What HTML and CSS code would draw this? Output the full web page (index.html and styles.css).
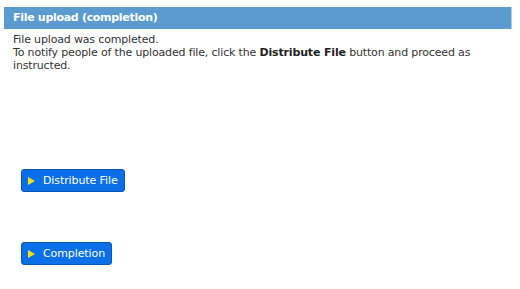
FILE: index.html
```html
<!DOCTYPE html>
<html lang="en">

<head>
    <meta charset="UTF-8">
    <meta name="viewport" content="width=device-width, initial-scale=1.0">
    <title>File upload (completion)</title>
    <link rel="stylesheet" href="styles.css">
</head>

<body>
    <div class="page">
        <h1 class="title-bar">File upload (completion)</h1>
        <div class="message">
            <p>File upload was completed.</p>
            <p>To notify people of the uploaded file, click the <b>Distribute File</b> button and proceed as instructed.</p>
        </div>

        <div class="actions">
            <a href="#" class="button">Distribute File</a>
            <a href="#" class="button">Completion</a>
        </div>
    </div>
</body>

</html>
```

FILE: styles.css
```css
body {
    font-family: "DejaVu Sans", Verdana, sans-serif;
    margin: 0;
    padding: 0;
    background-color: #fff;
    color: #333;
}

.page {
    padding: 7px 8px 0 4px;
}

.title-bar {
    margin: 0;
    height: 22px;
    line-height: 22px;
    padding-left: 9px;
    background-color: #5b9bd0;
    border-right: 1px solid #a9cdea;
    color: #fff;
    font-size: 11px;
    font-weight: bold;
    letter-spacing: -0.3px;
}

.message {
    padding: 4px 0 0 9px;
    font-size: 11px;
    line-height: 13px;
    letter-spacing: -0.16px;
}

.message p {
    margin: 0;
}

.message b {
    color: #222;
}

.actions {
    display: flex;
    flex-direction: column;
    align-items: flex-start;
    gap: 50px;
    margin-top: 97px;
    padding-left: 17px;
}

.button {
    display: flex;
    align-items: center;
    height: 21px;
    padding: 0 6px 0 6px;
    background-color: #0b6fe8;
    border: 1px solid #0a55b8;
    border-radius: 3px;
    color: #fff;
    font-size: 11px;
    letter-spacing: -0.1px;
    text-decoration: none;
}

.button::before {
    content: "";
    width: 0;
    height: 0;
    margin-right: 8px;
    border-top: 4px solid transparent;
    border-bottom: 4px solid transparent;
    border-left: 7px solid #f5e21c;
}
```
